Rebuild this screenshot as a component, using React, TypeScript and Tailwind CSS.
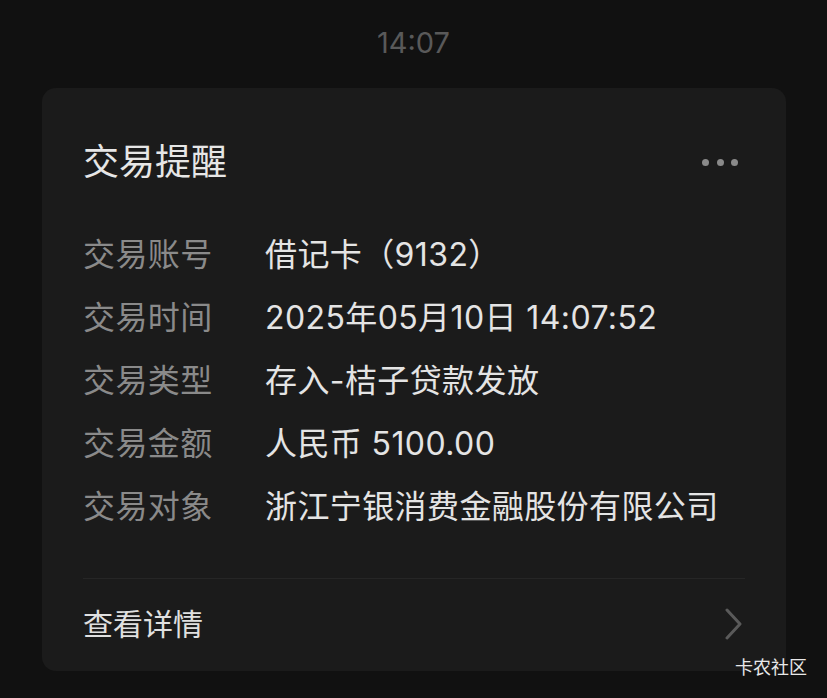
const ROWS = [
  { label: '交易账号', value: '借记卡（9132）' },
  { label: '交易时间', value: '2025年05月10日 14:07:52' },
  { label: '交易类型', value: '存入-桔子贷款发放' },
  { label: '交易金额', value: '人民币 5100.00' },
  { label: '交易对象', value: '浙江宁银消费金融股份有限公司' },
];

const FONT = "font-['Inter','Noto_Sans_CJK_SC',sans-serif]";

export default function App() {
  return (
    <div className={`relative w-[827px] h-[698px] overflow-hidden bg-[#111111] ${FONT}`}>
      <div className="h-[84px] flex items-center justify-center">
        <span className="text-[29px] leading-none text-[#595959]">14:07</span>
      </div>

      <div className="mt-[4px] ml-[42px] w-[744px] h-[583px] rounded-[14px] bg-[#1b1b1b] px-[41px] flex flex-col">
        <div className="pt-[44px] h-[104px] flex items-center justify-between">
          <h1 className="text-[36px] leading-none text-[#e6e6e6]">交易提醒</h1>
          <div className="flex items-center gap-[7.5px] pr-[7px]">
            <span className="w-[7px] h-[7px] rounded-full bg-[#8a8a8a]" />
            <span className="w-[7px] h-[7px] rounded-full bg-[#8a8a8a]" />
            <span className="w-[7px] h-[7px] rounded-full bg-[#8a8a8a]" />
          </div>
        </div>

        <div className="mt-[31px] flex flex-col">
          {ROWS.map((row) => (
            <div key={row.label} className="h-[63px] flex items-center text-[32px] leading-none tracking-[0.4px]">
              <span className="w-[182px] shrink-0 text-[#8a8a8a]">{row.label}</span>
              <span className="text-[#e4e4e4] whitespace-nowrap">{row.value}</span>
            </div>
          ))}
        </div>

        <div className="mt-[40px] h-px bg-[#262626]" />

        <div className="flex-1 flex items-center justify-between pb-[2px]">
          <span className="text-[30px] leading-none text-[#e0e0e0]">查看详情</span>
          <svg width="18" height="32" viewBox="0 0 18 32" fill="none" className="mr-[3px]">
            <polyline points="3,2 16,16 3,30" stroke="#5a5a5a" strokeWidth="3" strokeLinecap="round" strokeLinejoin="round" />
          </svg>
        </div>
      </div>

      <span className="absolute left-[735px] top-[657px] text-[18px] leading-[22px] text-[#e8e8e8]">卡农社区</span>
    </div>
  );
}
